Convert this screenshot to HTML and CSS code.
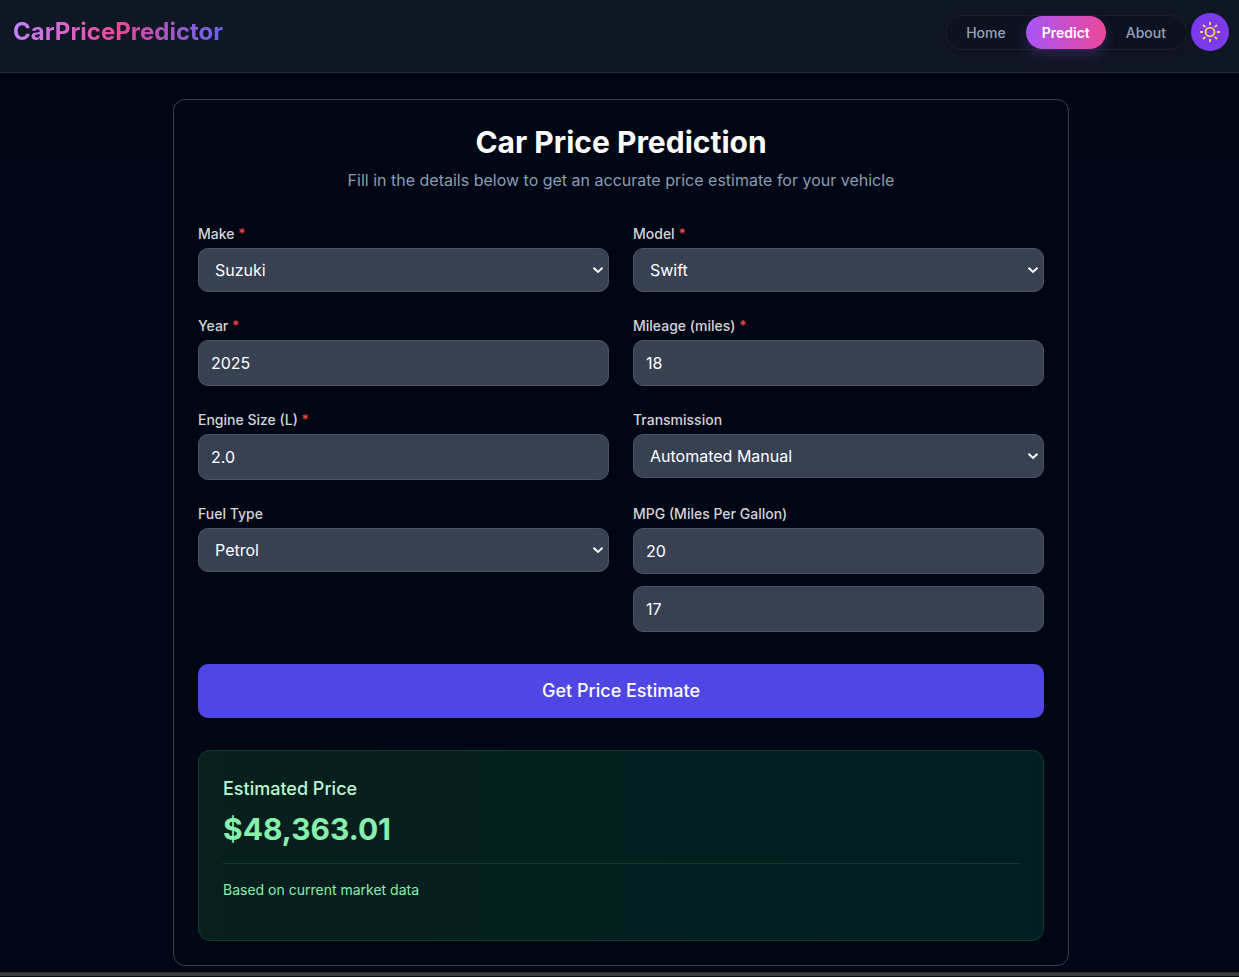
FILE: index.html
```html
<!DOCTYPE html>
<html lang="en">
<head>
<meta charset="utf-8">
<meta name="viewport" content="width=device-width, initial-scale=1">
<title>CarPricePredictor</title>
<link rel="stylesheet" href="styles.css">
</head>
<body>
<header class="header">
  <a class="logo" href="#">CarPricePredictor</a>
  <div class="header-actions">
    <nav class="nav" aria-label="Main">
      <a class="nav-link" href="#">Home</a>
      <a class="nav-link active" href="#" aria-current="page">Predict</a>
      <a class="nav-link" href="#">About</a>
    </nav>
    <button class="theme-toggle" type="button" aria-label="Toggle theme">
      <svg width="20" height="20" viewBox="0 0 20 20" fill="none" stroke="currentColor" stroke-width="1.9">
        <circle cx="10" cy="10" r="4.4"/>
        <path d="M10 0v3M10 17v3M0 10h3M17 10h3M3 3l2.2 2.2M14.8 14.8L17 17M3 17l2.2-2.2M14.8 5.2L17 3"/>
      </svg>
    </button>
  </div>
</header>
<main class="main">
  <section class="card">
    <h1 class="title">Car Price Prediction</h1>
    <p class="subtitle">Fill in the details below to get an accurate price estimate for your vehicle</p>
    <form class="form">
      <div class="grid">
        <div class="field">
          <label class="label" for="make">Make <span class="required">*</span></label>
          <select class="control select" id="make"><option>Suzuki</option></select>
        </div>
        <div class="field">
          <label class="label" for="model">Model <span class="required">*</span></label>
          <select class="control select" id="model"><option>Swift</option></select>
        </div>
        <div class="field">
          <label class="label" for="year">Year <span class="required">*</span></label>
          <input class="control input" id="year" type="text" inputmode="numeric" value="2025">
        </div>
        <div class="field">
          <label class="label" for="mileage">Mileage (miles) <span class="required">*</span></label>
          <input class="control input" id="mileage" type="text" inputmode="numeric" value="18">
        </div>
        <div class="field">
          <label class="label" for="engine">Engine Size (L) <span class="required">*</span></label>
          <input class="control input" id="engine" type="text" inputmode="decimal" value="2.0">
        </div>
        <div class="field">
          <label class="label" for="transmission">Transmission</label>
          <select class="control select" id="transmission"><option>Automated Manual</option></select>
        </div>
        <div class="field">
          <label class="label" for="fuel">Fuel Type</label>
          <select class="control select" id="fuel"><option>Petrol</option></select>
        </div>
        <div class="field">
          <label class="label" for="mpg">MPG (Miles Per Gallon)</label>
          <input class="control input" id="mpg" type="text" inputmode="numeric" value="20">
          <input class="control input extra" type="text" inputmode="numeric" aria-label="Second MPG value" value="17">
        </div>
      </div>
      <button class="submit" type="button">Get Price Estimate</button>
    </form>
    <section class="result">
      <h2 class="result-title">Estimated Price</h2>
      <p class="price">$48,363.01</p>
      <p class="note">Based on current market data</p>
    </section>
  </section>
</main>
<footer class="strip"></footer>
</body>
</html>
```

FILE: styles.css
```css
*, *::before, *::after { box-sizing: border-box; }

body {
  margin: 0;
  background: linear-gradient(to bottom, #010510, #010616 160px);
  color: #f9fafb;
  font-family: Inter, "Liberation Sans", sans-serif;
  font-size: 16px;
  line-height: 24px;
}

h1, h2, p { margin: 0; }

a { color: inherit; text-decoration: none; }

.header {
  display: flex;
  align-items: flex-start;
  justify-content: space-between;
  padding: 13px 10px 21px 13px;
  background: #0f1624;
  border-bottom: 1px solid #262b38;
}

.logo {
  font-size: 24px;
  line-height: 38px;
  font-weight: 700;
  background: linear-gradient(to right, #c084fc, #ec4899, #6366f1);
  -webkit-background-clip: text;
  background-clip: text;
  color: transparent;
}

.header-actions { display: flex; align-items: center; gap: 4px; }

.nav {
  display: flex;
  gap: 4px;
  padding: 0 4px;
  border: 1px solid #1a202e;
  border-radius: 999px;
  background: #0c1220;
  box-shadow: 0 4px 12px rgba(0, 0, 0, 0.15);
}

.nav-link {
  padding: 7px 16px 6px;
  border-radius: 999px;
  font-size: 14px;
  line-height: 20px;
  font-weight: 500;
  color: #94a3b8;
}

.nav-link.active {
  color: #fff;
  font-weight: 600;
  background: linear-gradient(to right, #a855f7, #ec4899);
  box-shadow: 0 6px 14px rgba(168, 85, 247, 0.22);
}

.theme-toggle {
  display: grid;
  place-items: center;
  width: 38px;
  height: 38px;
  padding: 0;
  border: 0;
  border-radius: 50%;
  background: #7c3aed;
  color: #fcd34d;
}

.main { padding: 26px 0 6px 3px; }

.card {
  max-width: 896px;
  margin: 0 auto;
  padding: 24px;
  border: 1px solid #374151;
  border-radius: 12px;
  background: #010615;
}

.title {
  font-size: 30px;
  line-height: 36px;
  font-weight: 700;
  text-align: center;
  color: #fff;
}

.subtitle { margin-top: 8px; text-align: center; color: #879db2; }

.form { margin-top: 32px; }

.grid {
  display: grid;
  grid-template-columns: 1fr 1fr;
  gap: 24px;
}

.field { display: flex; flex-direction: column; }

.label {
  margin-bottom: 4px;
  font-size: 14px;
  line-height: 20px;
  font-weight: 500;
  color: #d1d5db;
}

.required { color: #ef4444; }

.control {
  width: 100%;
  border: 1px solid #4b5563;
  border-radius: 10px;
  background-color: #374151;
  color: #fff;
  font: inherit;
}

.input { height: 46px; padding: 10px 12px; }

.select {
  height: 44px;
  padding: 8px 24px 8px 16px;
  appearance: none;
  background-image: url("data:image/svg+xml,%3Csvg xmlns='http://www.w3.org/2000/svg' width='12' height='8' viewBox='0 0 12 8'%3E%3Cpath d='M1.5 1.7L6 6l4.500-4.300' fill='none' stroke='white' stroke-width='1.900'/%3E%3C/svg%3E");
  background-repeat: no-repeat;
  background-position: right 4px center;
}

.extra { margin-top: 12px; }

.submit {
  display: block;
  width: 100%;
  margin-top: 32px;
  padding: 13px 24px;
  border: 0;
  border-radius: 10px;
  background: #4f46e5;
  color: #fff;
  font-family: inherit;
  font-size: 18px;
  line-height: 28px;
  font-weight: 500;
}

.result {
  margin-top: 32px;
  padding: 24px 24px 40px;
  border: 1px solid #0d4029;
  border-radius: 12px;
  background: linear-gradient(to right, #07201d, #031d22);
}

.result-title {
  font-size: 18px;
  line-height: 28px;
  font-weight: 500;
  color: #bbf7d0;
}

.price {
  margin-top: 8px;
  font-size: 30px;
  line-height: 36px;
  font-weight: 700;
  color: #86efac;
}

.note {
  margin-top: 16px;
  padding-top: 16px;
  border-top: 1px solid #0d4030;
  font-size: 14px;
  line-height: 20px;
  color: #86efac;
}

.strip {
  height: 5px;
  border-top: 1px solid #24262c;
  border-bottom: 1px solid #08090b;
  background: #3c3c3c;
}
```
